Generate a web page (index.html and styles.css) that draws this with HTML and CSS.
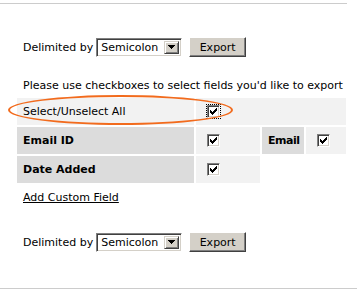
FILE: index.html
```html
<!DOCTYPE html>
<html lang="en">
<head>
    <meta charset="UTF-8">
    <title>Export Subscribers</title>
    <link rel="stylesheet" href="styles.css">
</head>
<body>
    <div class="panel">
        <div class="export-row">
            <span class="label">Delimited by</span>
            <span class="select">
                <span class="select-value">Semicolon</span>
                <span class="select-btn"><svg width="7" height="4" viewBox="0 0 7 4"><path d="M0 0h7v1h-1v1h-1v1h-1v1h-1v-1h-1v-1h-1v-1h-1z"/></svg></span>
            </span>
            <button class="btn">Export</button>
        </div>

        <p class="hint">Please use checkboxes to select fields you'd like to export</p>

        <div class="fields">
            <table class="field-table">
                <tr class="all-row">
                    <td class="all-label">Select/Unselect All</td>
                    <td class="check-cell" colspan="3">
                        <span class="cb focused"><svg width="13" height="13" viewBox="0 0 13 13"><path d="M3 5h1v3h-1zM4 6h1v3h-1zM5 7h1v3h-1zM6 6h1v3h-1zM7 5h1v3h-1zM8 4h1v3h-1zM9 3h1v3h-1z"/></svg></span>
                    </td>
                </tr>
                <tr>
                    <th>Email ID</th>
                    <td class="check-cell col-check">
                        <span class="cb"><svg width="13" height="13" viewBox="0 0 13 13"><path d="M3 5h1v3h-1zM4 6h1v3h-1zM5 7h1v3h-1zM6 6h1v3h-1zM7 5h1v3h-1zM8 4h1v3h-1zM9 3h1v3h-1z"/></svg></span>
                    </td>
                    <th class="short">Email</th>
                    <td class="check-cell">
                        <span class="cb"><svg width="13" height="13" viewBox="0 0 13 13"><path d="M3 5h1v3h-1zM4 6h1v3h-1zM5 7h1v3h-1zM6 6h1v3h-1zM7 5h1v3h-1zM8 4h1v3h-1zM9 3h1v3h-1z"/></svg></span>
                    </td>
                </tr>
                <tr>
                    <th>Date Added</th>
                    <td class="check-cell">
                        <span class="cb"><svg width="13" height="13" viewBox="0 0 13 13"><path d="M3 5h1v3h-1zM4 6h1v3h-1zM5 7h1v3h-1zM6 6h1v3h-1zM7 5h1v3h-1zM8 4h1v3h-1zM9 3h1v3h-1z"/></svg></span>
                    </td>
                    <td class="empty" colspan="2"></td>
                </tr>
            </table>
            <div class="highlight"></div>
        </div>

        <a class="add-link" href="#">Add Custom Field</a>

        <div class="export-row bottom">
            <span class="label">Delimited by</span>
            <span class="select">
                <span class="select-value">Semicolon</span>
                <span class="select-btn"><svg width="7" height="4" viewBox="0 0 7 4"><path d="M0 0h7v1h-1v1h-1v1h-1v1h-1v-1h-1v-1h-1v-1h-1z"/></svg></span>
            </span>
            <button class="btn">Export</button>
        </div>
    </div>
    <div class="footer-line"></div>
</body>
</html>
```

FILE: styles.css
```css
:root {
    --face: #d4d0c8;
    --shadow: #808080;
    --dark: #404040;
    --cell-light: #f2f2f2;
    --cell-dark: #dcdcdc;
    --line: #cccccc;
    --orange: #f26b1d;
}

* {
    margin: 0;
    padding: 0;
    box-sizing: border-box;
}

body {
    font-family: "DejaVu Sans", Verdana, sans-serif;
    font-size: 11px;
    color: #000;
    background: #fff;
    padding-top: 3px;
}

.panel {
    width: 347px;
    border-top: 1px solid var(--line);
    padding: 0 0 0 17px;
    height: 285px;
}

.export-row {
    display: flex;
    align-items: center;
    height: 20px;
    margin-top: 33px;
    padding-left: 6px;
}

.export-row .label {
    margin-right: 3px;
}

.select {
    display: flex;
    width: 86px;
    height: 19px;
    background: #fff;
    border: 1px solid;
    border-color: var(--shadow) #fff #fff var(--shadow);
    box-shadow: inset 1px 1px 0 var(--dark), inset -1px -1px 0 var(--face);
    padding: 2px;
}

.select-value {
    flex: 1;
    line-height: 13px;
    padding-left: 2px;
}

.select-btn {
    width: 15px;
    height: 13px;
    background: var(--face);
    border: 1px solid;
    border-color: var(--face) var(--dark) var(--dark) var(--face);
    box-shadow: inset 1px 1px 0 #fff, inset -1px -1px 0 var(--shadow);
    display: flex;
    align-items: center;
    justify-content: center;
}

.btn {
    margin-left: 7px;
    width: 57px;
    height: 20px;
    font: inherit;
    color: #000;
    background: var(--face);
    border: 1px solid;
    border-color: #fff var(--dark) var(--dark) #fff;
    box-shadow: inset -1px -1px 0 var(--shadow);
}

.hint {
    margin-top: 22px;
    padding-left: 6px;
    line-height: 14px;
}

.fields {
    position: relative;
    margin-top: 3px;
}

.field-table {
    border-collapse: separate;
    border-spacing: 2px;
    margin-left: -2px;
    width: 333px;
}

.field-table td,
.field-table th {
    height: 27px;
    text-align: left;
    vertical-align: middle;
}

.field-table th {
    background: var(--cell-dark);
    font-weight: bold;
    font-size: 11px;
    padding-left: 6px;
    width: 177px;
}

.field-table th.short {
    width: 42px;
    letter-spacing: -0.5px;
}

.all-label {
    background: var(--cell-light);
    padding-left: 6px;
}

.check-cell {
    background: var(--cell-light);
    padding-left: 11px;
}

.col-check {
    width: 64px;
}

.empty {
    background: #fff;
}

.cb {
    display: block;
    width: 13px;
    height: 13px;
    background: #fff;
    border: 1px solid;
    border-color: var(--shadow) #fff #fff var(--shadow);
    box-shadow: inset 1px 1px 0 var(--dark), inset -1px -1px 0 var(--face);
    position: relative;
}

.cb svg {
    position: absolute;
    top: -1px;
    left: -1px;
}

.cb.focused {
    outline: 1px dotted #000;
    outline-offset: 0;
}

.highlight {
    position: absolute;
    left: -9px;
    top: -1px;
    width: 225px;
    height: 30px;
    border: 2px solid var(--orange);
    border-radius: 50%;
    pointer-events: none;
}

.add-link {
    display: inline-block;
    margin-top: 6px;
    padding-left: 6px;
    color: #000;
    text-decoration: underline;
}

.export-row.bottom {
    margin-top: 28px;
}

.footer-line {
    border-top: 1px solid var(--line);
}
```
